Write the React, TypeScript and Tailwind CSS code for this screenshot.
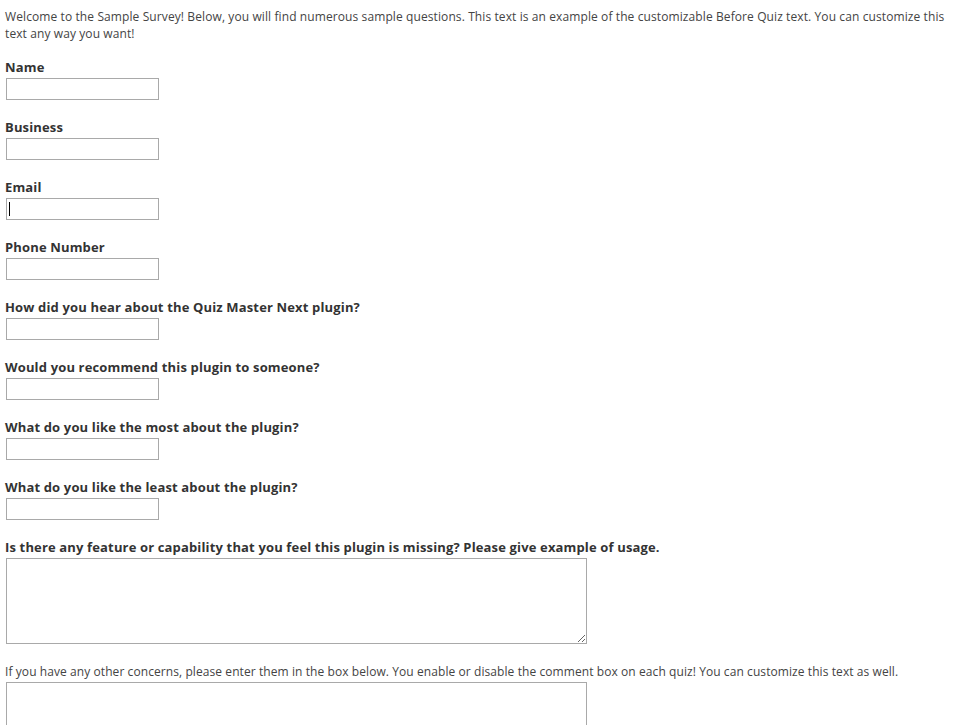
const fields = [
  "Name",
  "Business",
  "Email",
  "Phone Number",
  "How did you hear about the Quiz Master Next plugin?",
  "Would you recommend this plugin to someone?",
  "What do you like the most about the plugin?",
  "What do you like the least about the plugin?",
];

export default function App() {
  return (
    <div className="min-h-screen bg-white px-[5px] pt-[8px] font-['Open_Sans',sans-serif] text-[12px] tracking-[0.1px] text-[#444]">
      <p className="leading-[17px]">
        Welcome to the Sample Survey! Below, you will find numerous sample questions. This text is an example of the
        customizable Before Quiz text. You can customize this text any way you want!
      </p>

      <div className="mt-[16px] flex flex-col">
        {fields.map((label) => (
          <div key={label} className="mb-[18px] flex flex-col">
            <label className="text-[13px] font-bold leading-[18px] tracking-[0.15px] text-[#333]">{label}</label>
            <div className="relative ml-[1px] mt-[2px] w-[153px]">
              <input
                type="text"
                className="block h-[22px] w-[153px] border border-[#a9a9a9] bg-white px-[2px] text-[12px] outline-none"
              />
              {label === "Email" && (
                <span className="absolute left-[3px] top-[4px] h-[14px] w-[1px] bg-black" />
              )}
            </div>
          </div>
        ))}

        <div className="mb-[18px] flex flex-col">
          <label className="text-[13px] font-bold leading-[18px] tracking-[0.15px] text-[#333]">
            Is there any feature or capability that you feel this plugin is missing? Please give example of usage.
          </label>
          <textarea className="ml-[1px] mt-[2px] h-[86px] w-[581px] border border-[#a9a9a9] bg-white outline-none" />
        </div>

        <p className="pt-[1px] leading-[18px] tracking-[0.08px]">
          If you have any other concerns, please enter them in the box below. You enable or disable the comment box on
          each quiz! You can customize this text as well.
        </p>
        <textarea className="ml-[1px] mt-[1px] h-[86px] w-[581px] border border-[#a9a9a9] bg-white outline-none" />
      </div>
    </div>
  );
}
